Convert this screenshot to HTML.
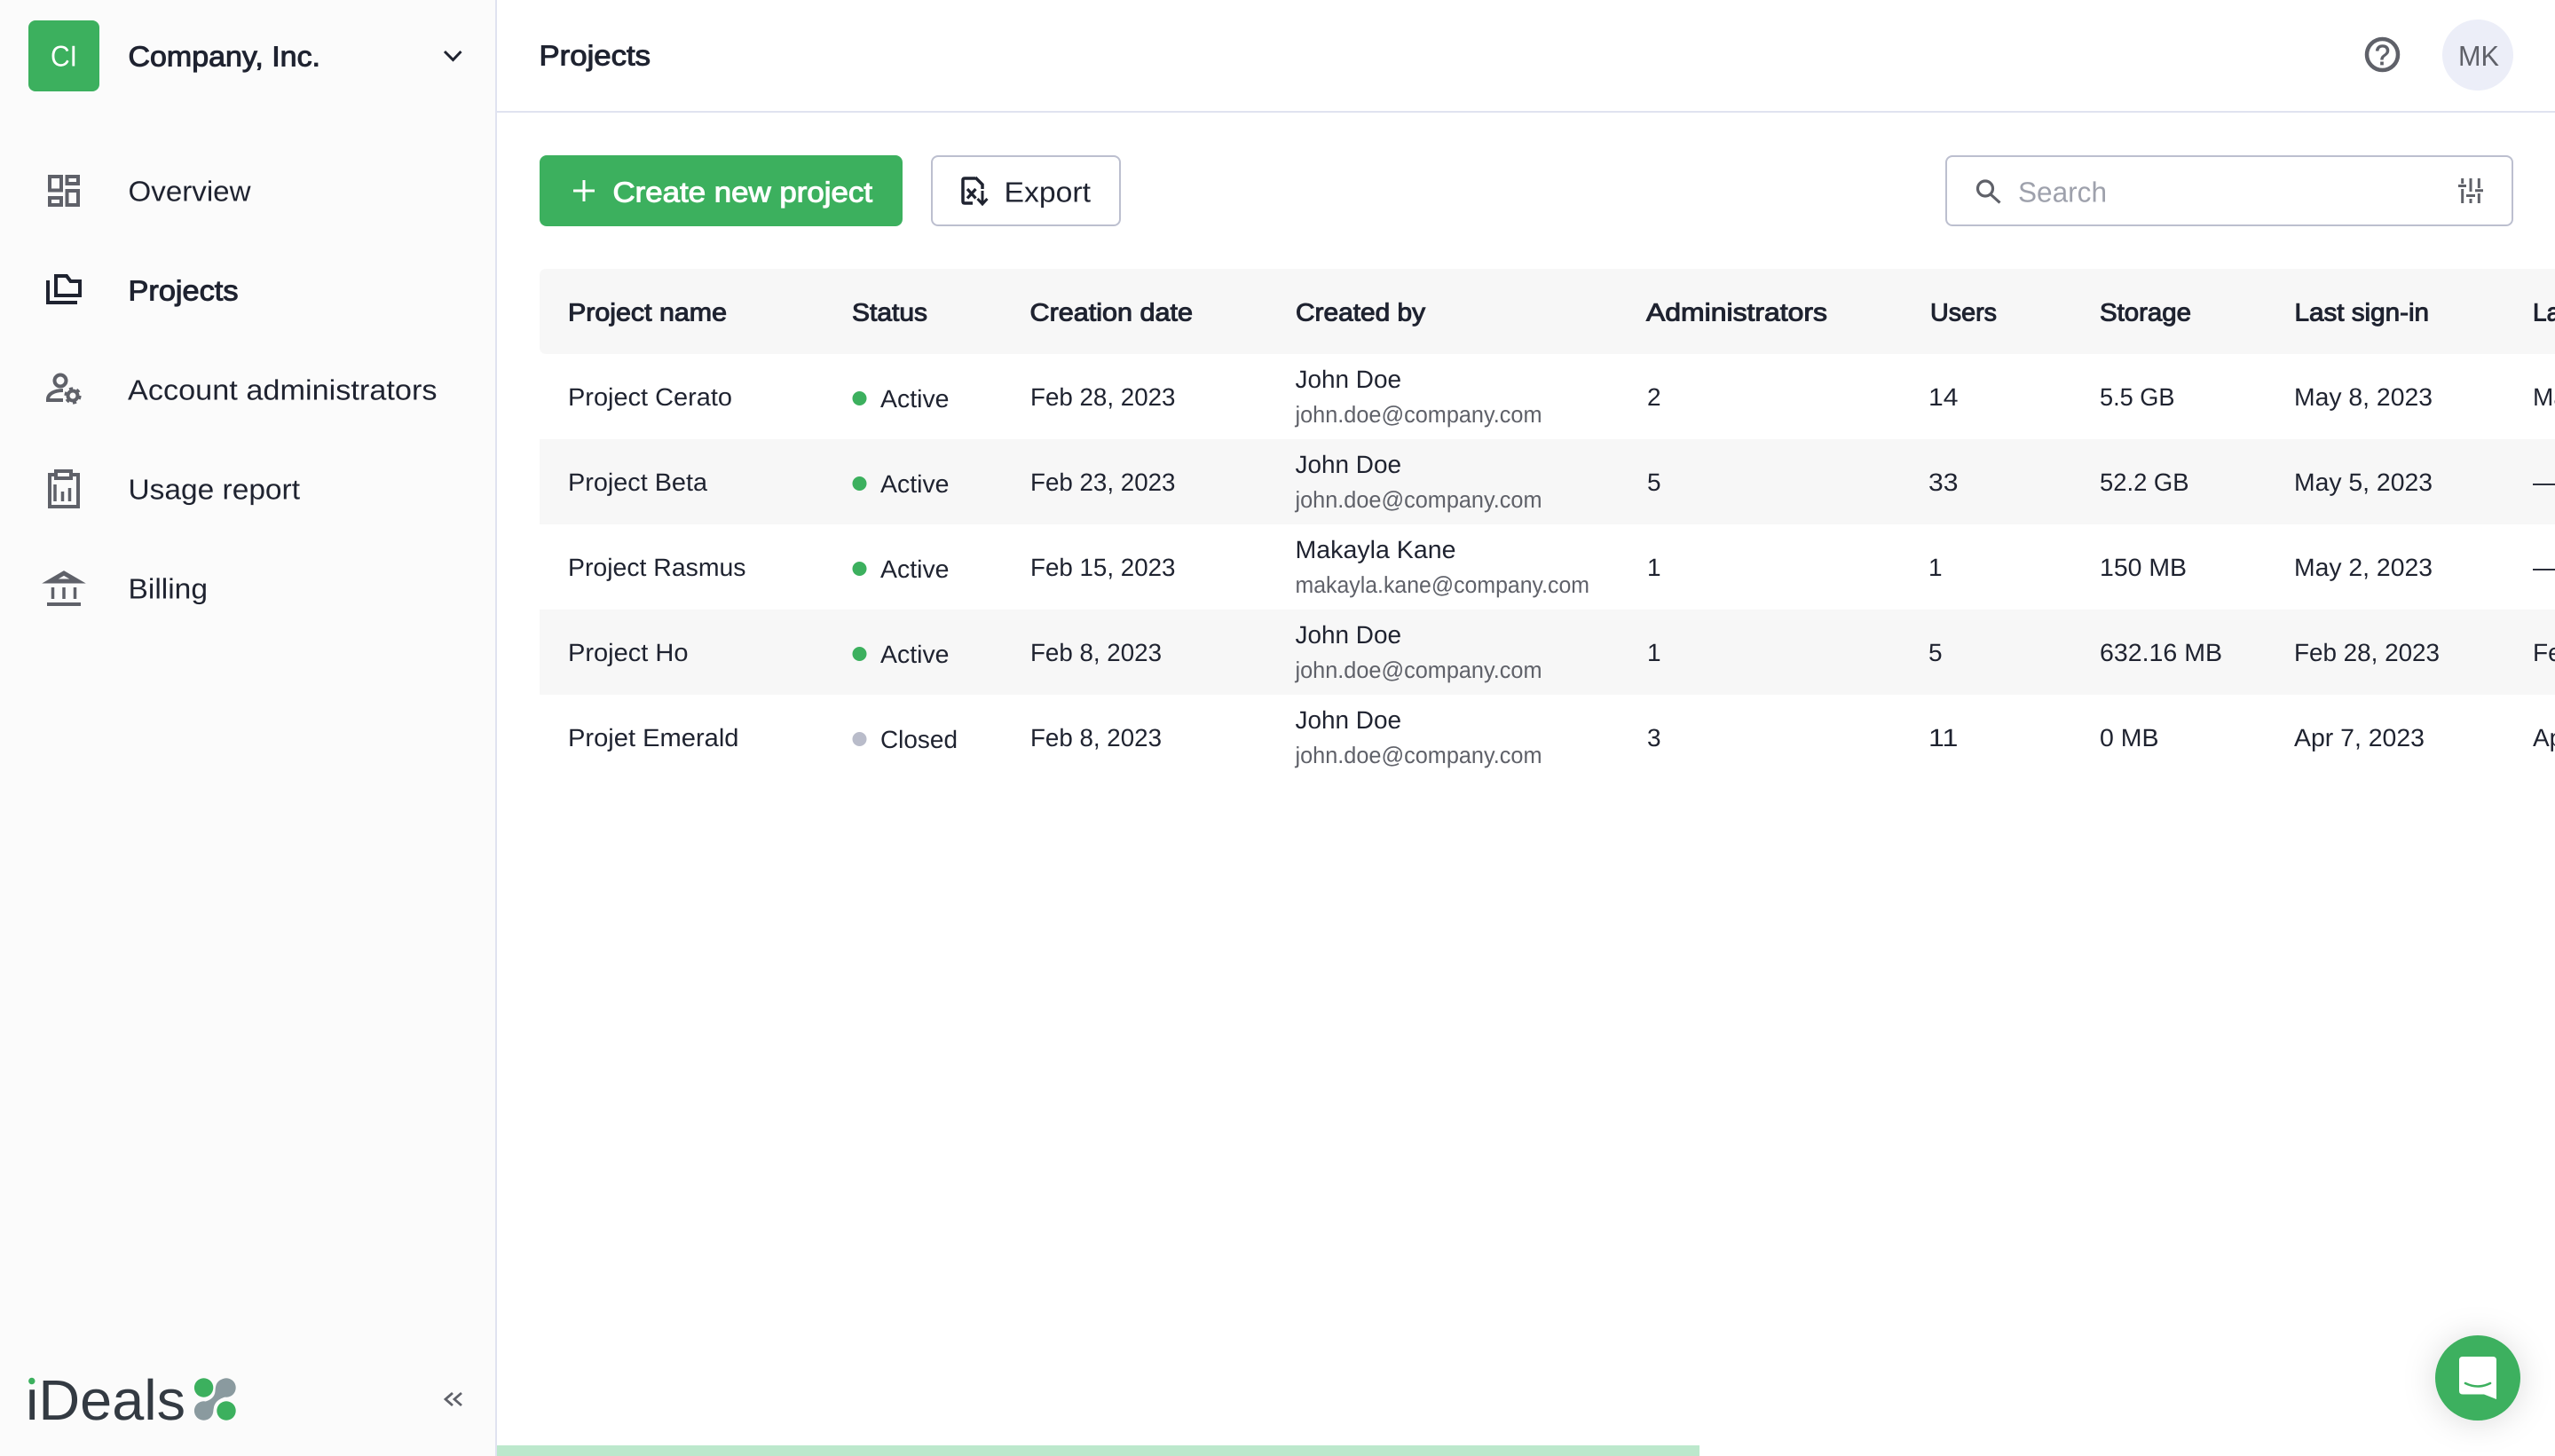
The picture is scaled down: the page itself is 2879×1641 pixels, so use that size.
<!DOCTYPE html>
<html lang="en">
<head>
<meta charset="utf-8">
<title>Projects</title>
<style>
html,body{margin:0;padding:0;background:#fff;width:2879px;height:1641px;overflow:hidden}
svg{display:block}
text{font-family:"Liberation Sans",Arial,sans-serif;fill:#1f2330;font-size:28px;text-rendering:geometricPrecision;white-space:pre}
.n{font-size:32px}
.sb{stroke:#1f2330;stroke-width:1px}
.w{fill:#fff}
.e{font-size:26px;fill:#5f6169}
.ic{fill:none;stroke:#5f6169;stroke-width:4}
.dk{fill:none;stroke:#1f2330;stroke-width:4}
</style>
</head>
<body>
<svg width="2879" height="1641" viewBox="0 0 2879 1641" xmlns="http://www.w3.org/2000/svg">
<defs>
<filter id="sh" x="-100%" y="-100%" width="300%" height="300%"><feDropShadow dx="0" dy="2" stdDeviation="18" flood-color="#000" flood-opacity=".14"/></filter>
</defs>
<rect width="2879" height="1641" fill="#fff"/>
<!-- sidebar -->
<rect width="558" height="1641" fill="#fbfbfb"/>
<rect x="558" width="2" height="1641" fill="#e0e3f0"/>
<rect x="560" y="125" width="2319" height="2" fill="#e0e3f0"/>
<rect x="32" y="23" width="80" height="80" rx="8" fill="#3cb05e"/>
<text x="57" y="74.500" class="n w" style="font-size:33px" textLength="30" lengthAdjust="spacingAndGlyphs">CI</text>
<text x="144.500" y="74.500" class="n sb" textLength="216.500" lengthAdjust="spacingAndGlyphs">Company, Inc.</text>
<path d="M501 58l9.500 9.500L519.500 58" fill="none" stroke="#1f2330" stroke-width="3"/>

<text x="144.500" y="226.500" class="n" textLength="138" lengthAdjust="spacingAndGlyphs">Overview</text>
<text x="144.500" y="338.500" class="n sb" textLength="124" lengthAdjust="spacingAndGlyphs">Projects</text>
<text x="144" y="450.500" class="n" textLength="348.500" lengthAdjust="spacingAndGlyphs">Account administrators</text>
<text x="144.500" y="562.500" class="n" textLength="193.500" lengthAdjust="spacingAndGlyphs">Usage report</text>
<text x="144.500" y="674.500" class="n" textLength="89.500" lengthAdjust="spacingAndGlyphs">Billing</text>

<!-- overview icon -->
<g class="ic">
<rect x="56" y="199" width="13" height="15.500"/>
<rect x="75.500" y="199" width="12.500" height="8"/>
<rect x="56" y="223" width="13" height="8"/>
<rect x="75.500" y="215" width="12.500" height="16"/>
</g>
<!-- projects icon -->
<path class="dk" d="M63 311H75L79.500 317H90V333H63Z"/>
<path class="dk" d="M54 316V341H87"/>
<!-- admin icon -->
<circle cx="68" cy="429" r="6.500" class="ic"/>
<path class="ic" d="M71 440C61 440 54 444 54 450V451H71"/>
<circle cx="82" cy="446" r="5.500" class="ic"/>
<circle cx="82" cy="446" r="8.300" fill="none" stroke="#5f6169" stroke-width="2.600" stroke-dasharray="4.200 4.500"/>
<!-- usage icon -->
<path class="ic" d="M61 535H56V571H88V535H82"/>
<rect x="63" y="531" width="17" height="8" class="ic"/>
<path d="M62 546V565M70.500 554V565M78.500 550V565" fill="none" stroke="#5f6169" stroke-width="3.500"/>
<!-- billing icon -->
<path class="ic" style="stroke-width:5" d="M56.500 655L72 646L87.500 655Z"/>
<path d="M59.500 662V675M72 662V675M84.500 662V675" fill="none" stroke="#5f6169" stroke-width="3.500"/>
<rect x="53" y="679" width="38" height="4" fill="#5f6169"/>

<!-- logo -->
<text x="29" y="1600" style="font-size:64px;fill:#333a42" textLength="180" lengthAdjust="spacingAndGlyphs">iDeals</text>
<rect x="29" y="1548" width="14" height="14" fill="#fbfbfb"/>
<circle cx="35.800" cy="1556.500" r="3.700" fill="#3cb05e"/>
<circle cx="255" cy="1564" r="10.700" fill="#8a9a9f"/>
<circle cx="229.600" cy="1590" r="10.700" fill="#8a9a9f"/>
<path d="M252 1554C244 1556 243 1561 242.500 1568C242 1574 238 1578 230 1580L233 1600C239 1598 240 1592 241 1586C242 1581 246 1576 256 1574Z" fill="#8a9a9f"/>
<circle cx="229.600" cy="1564" r="12.500" fill="#fbfbfb"/>
<circle cx="255" cy="1590" r="12.500" fill="#fbfbfb"/>
<circle cx="229.600" cy="1564" r="10.700" fill="#3cb05e"/>
<circle cx="255" cy="1590" r="10.700" fill="#3cb05e"/>
<path d="M510 1570L502 1577L510 1584M520 1570L512 1577L520 1584" fill="none" stroke="#5f6169" stroke-width="2.800"/>

<!-- header -->
<text x="607.500" y="73.500" class="n sb" textLength="125.500" lengthAdjust="spacingAndGlyphs">Projects</text>
<circle cx="2684.500" cy="61.500" r="17.500" class="ic" style="stroke-width:4.500"/>
<text x="2676" y="73" style="font-size:32px;fill:#5f6169;stroke:#5f6169;stroke-width:.8px" textLength="17" lengthAdjust="spacingAndGlyphs">?</text>
<circle cx="2792" cy="62" r="40" fill="#eceef8"/>
<text x="2770" y="74" class="n" style="fill:#5f6169" textLength="46" lengthAdjust="spacingAndGlyphs">MK</text>

<!-- toolbar -->
<rect x="608" y="175" width="409" height="80" rx="8" fill="#3cb05e"/>
<path d="M658 203V227M646 215H670" fill="none" stroke="#fff" stroke-width="3"/>
<text x="690.500" y="227.500" class="n w" style="stroke:#fff;stroke-width:1px" textLength="292.500" lengthAdjust="spacingAndGlyphs">Create new project</text>
<rect x="1050" y="176" width="212" height="78" rx="7" fill="#fff" stroke="#bcbfcf" stroke-width="2"/>
<path class="dk" style="stroke-width:3.500" d="M1099 201H1087Q1085 201 1085 203V227Q1085 229 1087 229H1096M1099 200L1107 208V213"/>
<path d="M1090 213L1099.500 223.500M1099.500 213L1090 223.500" fill="none" stroke="#1f2330" stroke-width="3.200"/>
<path d="M1107 215V229M1101.500 224L1107 230L1112.500 224" fill="none" stroke="#1f2330" stroke-width="3"/>
<text x="1131.500" y="227.500" class="n" textLength="97.500" lengthAdjust="spacingAndGlyphs">Export</text>

<rect x="2193" y="176" width="638" height="78" rx="7" fill="#fff" stroke="#bcbfcf" stroke-width="2"/>
<circle cx="2237" cy="212.500" r="8.500" fill="none" stroke="#5f6169" stroke-width="3.200"/>
<path d="M2243 219L2253.500 228.500" fill="none" stroke="#5f6169" stroke-width="3.200"/>
<text x="2274" y="227.500" class="n" style="fill:#9ea1ac" textLength="100" lengthAdjust="spacingAndGlyphs">Search</text>
<path d="M2774.700 201V207M2774.700 213V229M2770 209.500H2779M2784 201V216M2784 224V229M2779 220.500H2789M2793.300 201V212M2793.300 218V229M2789 214.800H2798" fill="none" stroke="#5f6169" stroke-width="3"/>

<!-- table backgrounds -->
<path d="M616 303H2879V399H616Q608 399 608 391V311Q608 303 616 303Z" fill="#f7f7f7"/>
<rect x="608" y="495" width="2271" height="96" fill="#f7f7f7"/>
<rect x="608" y="687" width="2271" height="96" fill="#f7f7f7"/>

<!-- table head -->
<g class="hd">
<text x="640" y="361.500" class="sb" textLength="179" lengthAdjust="spacingAndGlyphs">Project name</text>
<text x="960" y="361.500" class="sb" textLength="85" lengthAdjust="spacingAndGlyphs">Status</text>
<text x="1160.500" y="361.500" class="sb" textLength="183.500" lengthAdjust="spacingAndGlyphs">Creation date</text>
<text x="1460" y="361.500" class="sb" textLength="146" lengthAdjust="spacingAndGlyphs">Created by</text>
<text x="1855" y="361.500" class="sb" textLength="204" lengthAdjust="spacingAndGlyphs">Administrators</text>
<text x="2175" y="361.500" class="sb" textLength="75" lengthAdjust="spacingAndGlyphs">Users</text>
<text x="2366" y="361.500" class="sb" textLength="103" lengthAdjust="spacingAndGlyphs">Storage</text>
<text x="2585.500" y="361.500" class="sb" textLength="151.500" lengthAdjust="spacingAndGlyphs">Last sign-in</text>
<text x="2854" y="361.500" class="sb">Last activity</text>
</g>

<!-- row 1 -->
<text x="640" y="457" textLength="185" lengthAdjust="spacingAndGlyphs">Project Cerato</text>
<circle cx="968.500" cy="449" r="8" fill="#3cb05e"/>
<text x="992" y="459" textLength="77.500" lengthAdjust="spacingAndGlyphs">Active</text>
<text x="1161" y="457" textLength="163.500" lengthAdjust="spacingAndGlyphs">Feb 28, 2023</text>
<text x="1459.500" y="437" textLength="119.500" lengthAdjust="spacingAndGlyphs">John Doe</text>
<text x="1459.500" y="476" class="e" textLength="278" lengthAdjust="spacingAndGlyphs">john.doe@company.com</text>
<text x="1856" y="457">2</text>
<text x="2173" y="457" textLength="33.500" lengthAdjust="spacingAndGlyphs">14</text>
<text x="2366" y="457" textLength="84.500" lengthAdjust="spacingAndGlyphs">5.5 GB</text>
<text x="2585" y="457" textLength="156" lengthAdjust="spacingAndGlyphs">May 8, 2023</text>
<text x="2854" y="457">May 8, 2023</text>

<!-- row 2 -->
<text x="640" y="553" textLength="157" lengthAdjust="spacingAndGlyphs">Project Beta</text>
<circle cx="968.500" cy="545" r="8" fill="#3cb05e"/>
<text x="992" y="555" textLength="77.500" lengthAdjust="spacingAndGlyphs">Active</text>
<text x="1161" y="553" textLength="163.500" lengthAdjust="spacingAndGlyphs">Feb 23, 2023</text>
<text x="1459.500" y="533" textLength="119.500" lengthAdjust="spacingAndGlyphs">John Doe</text>
<text x="1459.500" y="572" class="e" textLength="278" lengthAdjust="spacingAndGlyphs">john.doe@company.com</text>
<text x="1856" y="553">5</text>
<text x="2173" y="553" textLength="33.500" lengthAdjust="spacingAndGlyphs">33</text>
<text x="2366" y="553" textLength="100.500" lengthAdjust="spacingAndGlyphs">52.2 GB</text>
<text x="2585" y="553" textLength="156" lengthAdjust="spacingAndGlyphs">May 5, 2023</text>
<text x="2854" y="553">—</text>

<!-- row 3 -->
<text x="640" y="649" textLength="200.500" lengthAdjust="spacingAndGlyphs">Project Rasmus</text>
<circle cx="968.500" cy="641" r="8" fill="#3cb05e"/>
<text x="992" y="651" textLength="77.500" lengthAdjust="spacingAndGlyphs">Active</text>
<text x="1161" y="649" textLength="163.500" lengthAdjust="spacingAndGlyphs">Feb 15, 2023</text>
<text x="1459.500" y="629" textLength="181" lengthAdjust="spacingAndGlyphs">Makayla Kane</text>
<text x="1459.500" y="668" class="e" textLength="331.500" lengthAdjust="spacingAndGlyphs">makayla.kane@company.com</text>
<text x="1856" y="649">1</text>
<text x="2173" y="649">1</text>
<text x="2366" y="649" textLength="98" lengthAdjust="spacingAndGlyphs">150 MB</text>
<text x="2585" y="649" textLength="156" lengthAdjust="spacingAndGlyphs">May 2, 2023</text>
<text x="2854" y="649">—</text>

<!-- row 4 -->
<text x="640" y="745" textLength="135.500" lengthAdjust="spacingAndGlyphs">Project Ho</text>
<circle cx="968.500" cy="737" r="8" fill="#3cb05e"/>
<text x="992" y="747" textLength="77.500" lengthAdjust="spacingAndGlyphs">Active</text>
<text x="1161" y="745" textLength="148" lengthAdjust="spacingAndGlyphs">Feb 8, 2023</text>
<text x="1459.500" y="725" textLength="119.500" lengthAdjust="spacingAndGlyphs">John Doe</text>
<text x="1459.500" y="764" class="e" textLength="278" lengthAdjust="spacingAndGlyphs">john.doe@company.com</text>
<text x="1856" y="745">1</text>
<text x="2173" y="745">5</text>
<text x="2366" y="745" textLength="138" lengthAdjust="spacingAndGlyphs">632.16 MB</text>
<text x="2585" y="745" textLength="164" lengthAdjust="spacingAndGlyphs">Feb 28, 2023</text>
<text x="2854" y="745">Feb 28, 2023</text>

<!-- row 5 -->
<text x="640" y="841" textLength="192.500" lengthAdjust="spacingAndGlyphs">Projet Emerald</text>
<circle cx="968.500" cy="833" r="8" fill="#b9bcca"/>
<text x="992" y="843" textLength="87" lengthAdjust="spacingAndGlyphs">Closed</text>
<text x="1161" y="841" textLength="148" lengthAdjust="spacingAndGlyphs">Feb 8, 2023</text>
<text x="1459.500" y="821" textLength="119.500" lengthAdjust="spacingAndGlyphs">John Doe</text>
<text x="1459.500" y="860" class="e" textLength="278" lengthAdjust="spacingAndGlyphs">john.doe@company.com</text>
<text x="1856" y="841">3</text>
<text x="2173" y="841" textLength="33.500" lengthAdjust="spacingAndGlyphs">11</text>
<text x="2366" y="841" textLength="66.500" lengthAdjust="spacingAndGlyphs">0 MB</text>
<text x="2585" y="841" textLength="147" lengthAdjust="spacingAndGlyphs">Apr 7, 2023</text>
<text x="2854" y="841">Apr 7, 2023</text>

<!-- scrollbar -->
<rect x="560" y="1629" width="1355" height="12" fill="#bce8cc"/>

<!-- chat -->
<circle cx="2792" cy="1553" r="48" fill="#3cb05e" filter="url(#sh)"/>
<path d="M2775 1529H2809Q2813 1529 2813 1533V1577L2799 1571.500H2775Q2771 1571.500 2771 1567.500V1533Q2771 1529 2775 1529Z" fill="#fff"/>
<path d="M2778 1559Q2792 1566 2806 1559" fill="none" stroke="#3cb05e" stroke-width="2.600" stroke-linecap="round"/>
</svg>
</body>
</html>
